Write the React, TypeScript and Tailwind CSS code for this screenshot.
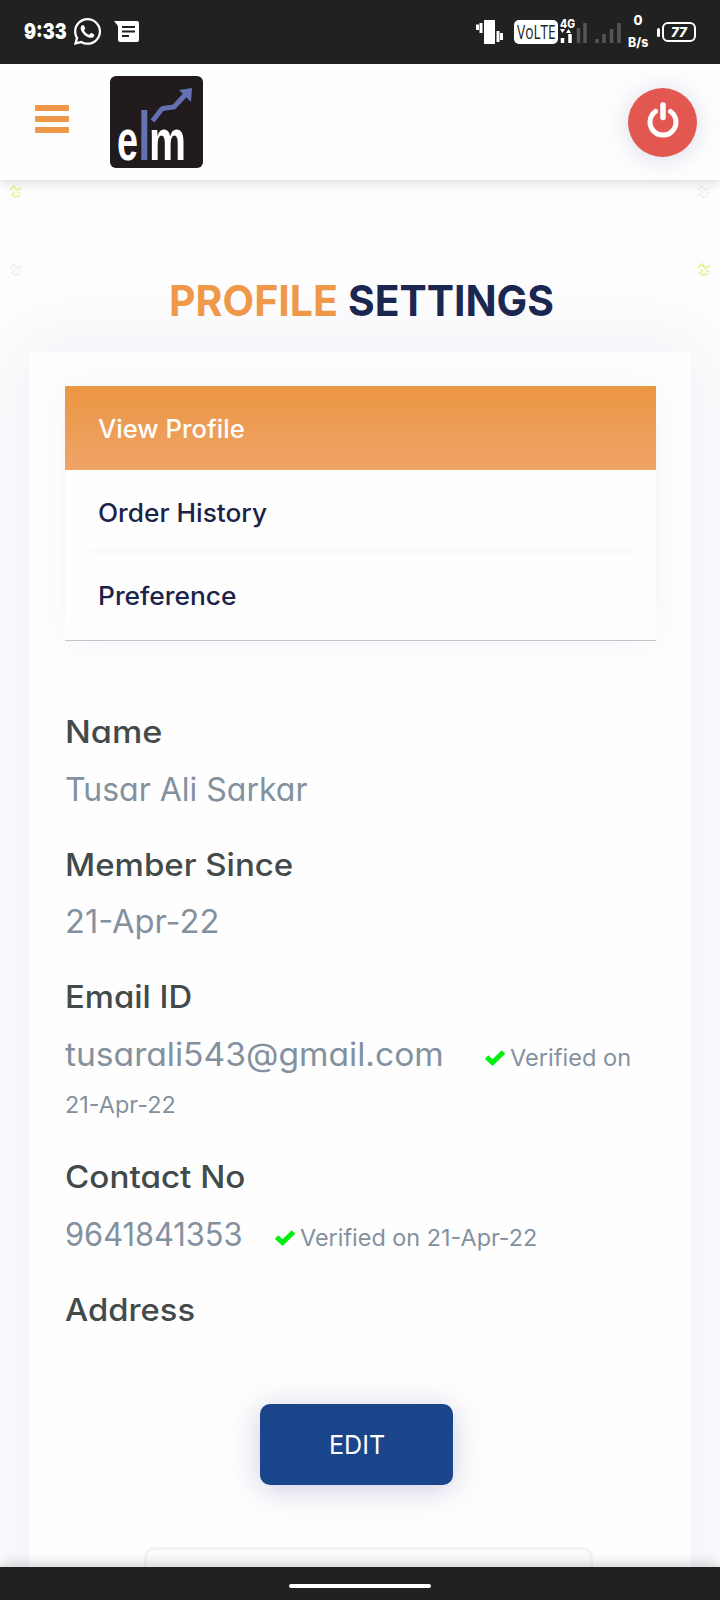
import { useLayoutEffect, useRef, useState } from "react";
import type { ReactNode } from "react";
import { FaWhatsapp } from "react-icons/fa";

/** Text on one line whose glyphs are widened or narrowed so that it fills a given width. */
function FitText({ text, width, className = "" }: { text: string; width: number; className?: string }) {
  const ref = useRef<HTMLSpanElement>(null);
  const [scale, setScale] = useState(1);
  useLayoutEffect(() => {
    if (ref.current) setScale(width / ref.current.offsetWidth);
  }, [text, width]);
  return (
    <span className={`inline-block whitespace-nowrap text-left ${className}`} style={{ width }}>
      <span ref={ref} className="inline-block origin-left" style={{ transform: `scaleX(${scale})` }}>
        {text}
      </span>
    </span>
  );
}

function StatusBar() {
  return (
    <div className="flex h-16 shrink-0 items-center bg-[#212121] text-white">
      <FitText text="9:33" width={43} className="ml-6 pb-[2px] text-[22px] font-black leading-none" />
      <FaWhatsapp className="-mt-[2px] ml-[5px] size-[31px]" />
      <svg className="ml-[10px] h-[22px] w-[27px]" viewBox="0 0 27 22">
        <path d="M1 0H24Q26 0 26 2V19Q26 21 24 21H7Q5 21 5 19V5Z" fill="white" />
        <path d="M9 6H22M9 10.500H22M9 15H16" stroke="#212121" strokeWidth="2" />
      </svg>
      <svg className="ml-auto h-[26px] w-[30px]" viewBox="0 0 30 26">
        <path d="M9 1H20V25H9Z" fill="white" />
        <path d="M6 4V14M2.500 5.500V11M23 12V23M26.500 14V21" stroke="white" strokeWidth="3" />
      </svg>
      <div className="ml-[9px] flex h-[24px] w-[44px] items-center justify-center rounded-[5px] bg-white text-[#212121]">
        <FitText text="VoLTE" width={39} className="font-['Open_Sans',sans-serif] text-[20px] leading-none" />
      </div>
      <svg className="h-[32px] w-[64px] overflow-visible" viewBox="0 0 64 32">
        <text x="2" y="11.500" fontSize="12" fontWeight="800" fill="white" textLength="15" lengthAdjust="spacingAndGlyphs">4G</text>
        <path d="M2 13H7L4.500 17ZM8 17H13L10.500 13Z" fill="white" />
        <path d="M4.500 22V27M12 18V27" stroke="white" strokeWidth="3.500" />
        <path d="M20.500 12V27M27 7V27" stroke="#555" strokeWidth="3.500" />
        <path d="M39 23V27M46 18V27M53.500 13V27M61 7V27" stroke="#555" strokeWidth="3.500" />
      </svg>
      <div className="ml-[5px] flex w-[22px] flex-col items-center gap-[9px] pb-[2px] text-[13px] font-extrabold leading-[13px]">
        <span>0</span>
        <FitText text="B/s" width={20} />
      </div>
      <div className="ml-[8px] mr-[24px] flex items-center gap-[2px]">
        <div className="h-[9px] w-[3px] rounded-sm bg-white" />
        <div className="flex h-[20px] w-[34px] items-center justify-center rounded-[6px] border-2 border-white">
          <FitText text="77" width={16} className="text-[13px] font-black italic leading-none" />
        </div>
      </div>
    </div>
  );
}

function Logo() {
  return (
    <svg className="ml-[41px] h-[92px] w-[93px] overflow-visible" viewBox="0 0 93 92">
      <rect width="93" height="92" rx="6" fill="#211b1d" />
      <g fontFamily="Liberation Sans Narrow, Liberation Sans, sans-serif" fontWeight="700" fill="white">
        <text x="7" y="83.500" fontSize="58" textLength="21" lengthAdjust="spacingAndGlyphs">e</text>
        <text x="39" y="83.500" fontSize="58" textLength="37" lengthAdjust="spacingAndGlyphs">m</text>
      </g>
      <path d="M34.300 34V84" stroke="#6472b2" strokeWidth="6" />
      <path d="M42.500 45L51 34Q52.500 32 56 32L64 31L75 19" fill="none" stroke="#6470b4" strokeWidth="5" />
      <path d="M69 14L82 12L81 26Z" fill="#6470b4" />
    </svg>
  );
}

function Header() {
  return (
    <header className="relative z-10 flex h-[116px] shrink-0 items-center bg-[#fefefe] shadow-[0_3px_10px_rgba(0,0,0,0.13)]">
      <div className="-mt-[6px] ml-[35px] flex w-[34px] flex-col gap-[5px]">
        <div className="h-[6px] rounded-[1px] bg-[#f0984a]" />
        <div className="h-[6px] rounded-[1px] bg-[#f0984a]" />
        <div className="h-[6px] rounded-[1px] bg-[#f0984a]" />
      </div>
      <Logo />
      <button className="ml-auto mr-[23px] flex size-[69px] items-center justify-center rounded-full bg-[#e2574f] pb-[6px] shadow-[0_2px_26px_rgba(60,80,150,0.2)]">
        <svg className="size-[34px] overflow-visible" viewBox="0 0 34 34" fill="none" stroke="white" strokeWidth="5" strokeLinecap="round">
          <path d="M17 3V15.500" strokeWidth="5.500" />
          <path d="M9.500 9.500A13 13 0 1 0 24.500 9.500" />
        </svg>
      </button>
    </header>
  );
}

function Speck({ className }: { className: string }) {
  return (
    <svg className={`size-[16px] ${className}`} viewBox="0 0 16 16" fill="none" stroke="currentColor" strokeWidth="2">
      <path d="M2 6L6 2L9 6L14 4M3 10L7 13L12 12M6 7V10M10 8L13 10" />
    </svg>
  );
}

function Verified({ children }: { children: ReactNode }) {
  return (
    <span className="flex items-baseline gap-[5px] text-[23px]">
      <svg className="h-[16px] w-[20px] self-center text-[#00f010]" viewBox="0 0 20 16" fill="none" stroke="currentColor" strokeWidth="5">
        <path d="M1.500 7L7.500 12.500L18.500 2" />
      </svg>
      {children}
    </span>
  );
}

function Field({ label, labelWidth, children }: { label: string; labelWidth: number; children?: ReactNode }) {
  return (
    <div className="mb-[27px]">
      <div className="h-[48px] text-[31px] font-medium leading-[48px] text-[#434a4a]">
        <FitText text={label} width={labelWidth} />
      </div>
      {children && <div className="mt-[9.5px] text-[#83919e]">{children}</div>}
    </div>
  );
}

export default function App() {
  return (
    <div className="flex h-[1600px] w-[720px] flex-col overflow-hidden bg-[#fdfdfe] font-['Inter',sans-serif] [font-feature-settings:'cv11']">
      <StatusBar />
      <Header />
      <main className="flex min-h-0 flex-1 flex-col overflow-hidden">
        <div className="flex h-[104px] shrink-0 flex-col justify-between px-[8px] pb-[6px] pt-[4px]">
          <div className="flex justify-between">
            <Speck className="text-[#eaf5a8]" />
            <Speck className="text-[#f1f1f1]" />
          </div>
          <div className="flex justify-between">
            <Speck className="text-[#f1f1f1]" />
            <Speck className="text-[#e6f29a]" />
          </div>
        </div>
        <h1 className="relative z-10 flex h-[68px] shrink-0 justify-center gap-[10px] pl-[2px] text-[43px] font-bold leading-[33px]">
          <FitText text="PROFILE" width={169} className="text-[#f0984a]" />
          <FitText text="SETTINGS" width={206} className="text-[#1b2750]" />
        </h1>
        <section className="mx-[29px] flex h-[1300px] shrink-0 flex-col rounded-[4px] bg-[#fefefe] px-[36px] pt-[34px] shadow-[0_0_70px_rgba(70,70,150,0.08)]">
          <nav className="h-[255px] w-[591px] shrink-0 border-b border-[#c4c4cf] text-[25px] font-medium text-[#1b2348] shadow-[0_0_30px_rgba(70,70,150,0.05)]">
            <div className="h-[84px] bg-linear-to-b from-[#eb9642] to-[#efa366] pl-[33px] leading-[86px] text-white">
              <FitText text="View Profile" width={147} />
            </div>
            <div className="mx-[24px] h-[83px] border-b-4 border-[#f9f9fa] pl-[9px] leading-[86px]">
              <FitText text="Order History" width={169} />
            </div>
            <div className="pl-[33px] leading-[86px]">
              <FitText text="Preference" width={138} />
            </div>
          </nav>
          <div className="mt-[67px] h-[696px] shrink-0">
            <Field label="Name" labelWidth={97}>
              <div className="h-[48px] text-[32px] leading-[48px]">
                <FitText text="Tusar Ali Sarkar" width={242} />
              </div>
            </Field>
            <Field label="Member Since" labelWidth={228}>
              <div className="h-[48px] text-[32px] leading-[48px]">
                <FitText text="21-Apr-22" width={154} />
              </div>
            </Field>
            <Field label="Email ID" labelWidth={127}>
              <div className="flex h-[48px] items-baseline gap-[41px] text-[32px] leading-[48px]">
                <FitText text="tusarali543@gmail.com" width={379} />
                <Verified>
                  <FitText text="Verified on" width={121} />
                </Verified>
              </div>
              <div className="h-[47.5px] text-[23px] leading-[52px]">
                <FitText text="21-Apr-22" width={111} />
              </div>
            </Field>
            <Field label="Contact No" labelWidth={180}>
              <div className="flex h-[48px] items-baseline gap-[32px] text-[32px] leading-[48px]">
                <FitText text="9641841353" width={178} />
                <Verified>
                  <FitText text="Verified on 21-Apr-22" width={237} />
                </Verified>
              </div>
            </Field>
            <Field label="Address" labelWidth={130} />
          </div>
          <button className="ml-[195px] h-[81px] w-[193px] shrink-0 rounded-[10px] bg-[#1b458a] text-[26px] text-white shadow-[0_4px_30px_rgba(60,60,150,0.26)]">
            <FitText text="EDIT" width={56} />
          </button>
          <div className="ml-[79px] mt-[62px] h-[60px] w-[449px] shrink-0 rounded-[10px] border-3 border-[#f4f4f4] bg-[#fcfcfc]" />
        </section>
      </main>
      <footer className="relative z-10 flex h-[33px] shrink-0 justify-center bg-[#212121] pt-[17px] shadow-[0_-2px_14px_rgba(0,0,0,0.2)]">
        <div className="h-[4px] w-[142px] rounded-full bg-white" />
      </footer>
    </div>
  );
}
